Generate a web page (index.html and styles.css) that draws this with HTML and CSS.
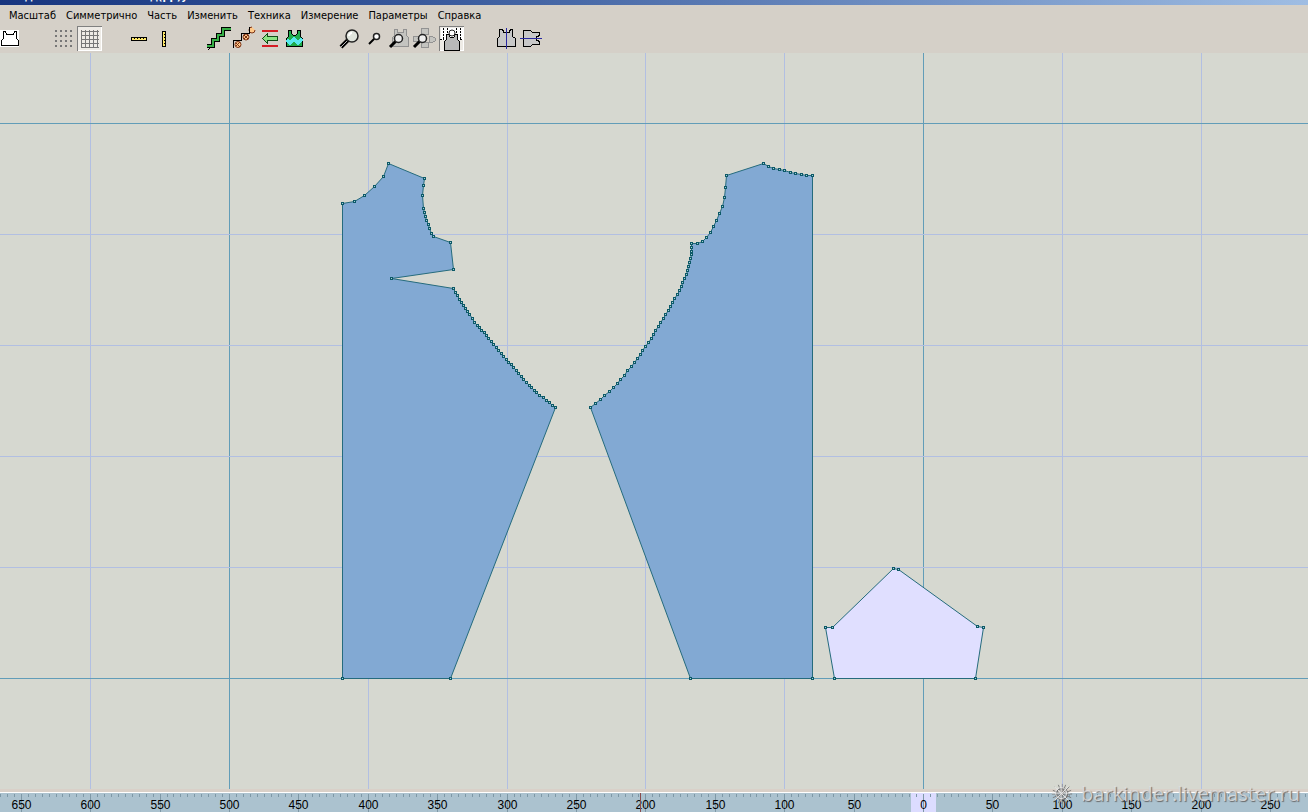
FILE: index.html
```
<!DOCTYPE html>
<html lang="ru">
<head>
  <meta charset="UTF-8" />
  <meta name="viewport" content="width=device-width, initial-scale=1.0" />
  <title>Редактор лекал</title>
  <link rel="stylesheet" href="styles.css">
</head>
<body>
  <header class="titlebar"><span class="title-left">Модель</span><span>д(рр)у</span></header>

  <nav class="menu">
    <button>Масштаб</button>
    <button>Симметрично</button>
    <button>Часть</button>
    <button>Изменить</button>
    <button>Техника</button>
    <button>Измерение</button>
    <button>Параметры</button>
    <button>Справка</button>
  </nav>

  <div class="toolbar">
    <div class="group first">
      <button aria-label="Деталь">
        <svg viewBox="0 0 25 25"><path fill="#fff" d="M3 4h19v17H3z"/><path class="line" d="M4.500 19.500V14.500L6.500 12.500V5.500H8.500L9.500 8.500H16.500L17.500 5.500H19.500V12.500L21.500 14.500V19.500Z"/></svg>
      </button>
    </div>

    <div class="group">
      <button aria-label="Точки сетки">
        <svg viewBox="0 0 25 25"><path stroke="#777" stroke-width="2" stroke-dasharray="2 3" d="M3 5h17M3 10h17M3 15h17M3 20h17"/></svg>
      </button>
      <button class="pressed" aria-label="Сетка">
        <svg viewBox="0 0 25 25"><path stroke="#777" fill="none" d="M4.500 4v18M8.500 4v18M12.500 4v18M16.500 4v18M20.500 4v18M4 5.500h18M4 9.500h18M4 13.500h18M4 17.500h18M4 21.500h18"/></svg>
      </button>
    </div>

    <div class="group near">
      <button aria-label="Горизонтальная линейка">
        <svg viewBox="0 0 25 25"><path fill="#ffe96b" stroke="#000" d="M5.500 11.500h15v3h-15z"/><path stroke="#000" d="M8.500 12v1M11.500 12v1M14.500 12v1M17.500 12v1"/></svg>
      </button>
      <button aria-label="Вертикальная линейка">
        <svg viewBox="0 0 25 25"><path fill="#ffe96b" stroke="#000" d="M11.500 5.500h3v15h-3z"/><path stroke="#000" d="M13 8.500h1M13 11.500h1M13 14.500h1M13 17.500h1"/></svg>
      </button>
    </div>

    <div class="group wide">
      <button aria-label="Ступени">
        <svg viewBox="0 0 25 25"><path fill="none" stroke="#000" stroke-width="4" d="M0 20H6V14H11V9H16V3H24"/><path fill="none" stroke="#36ad46" stroke-width="2" d="M0 20H6V14H11V9H16V3H24"/><path stroke="#000" d="M1 24l3-3"/></svg>
      </button>
      <button aria-label="Ступени с кругами">
        <svg viewBox="0 0 25 25"><g class="smooth" fill="#ffc888" stroke="#7c3215"><circle cx="6" cy="18.500" r="3"/><circle cx="14" cy="11" r="3"/><path d="M20 1a3 3 0 1 0 3 3"/><path d="M4 17l4 4M8 16l-4 4M12 9l4 4M16 9l-4 4"/></g><path class="line" d="M1.500 22V14.500H9.500V7.500H17.500V1"/></svg>
      </button>
      <button aria-label="Сдвиг">
        <svg viewBox="0 0 25 25"><path stroke="#d41c24" stroke-width="2" d="M5 5h16M5 20h16"/><path fill="#8ce285" stroke="#104c16" d="M5.500 12.500l5-5v3h10v4h-10v3z"/></svg>
      </button>
      <button aria-label="Узор детали">
        <svg viewBox="0 0 25 25"><path fill="#20ac4c" stroke="#000" d="M4.500 20.500V12.500L6.500 10.500V4.500H9.500V7.500L11 9H14L15.500 7.500V4.500H18.500V10.500L20.500 12.500V20.500Z"/><path fill="none" stroke="#57e9ef" stroke-width="3" d="M5 14l3 3 4-4 4 4 4-4"/></svg>
      </button>
    </div>

    <div class="group">
      <button aria-label="Крупный масштаб">
        <svg class="smooth" viewBox="0 0 25 25"><path stroke="#000" stroke-width="4" d="M4 21l7-7"/><path stroke="#bbb" stroke-width="1" d="M4 21l7-7"/><circle cx="15" cy="10" r="6" fill="#dfe4dc" stroke="#222" stroke-width="1.500"/><path fill="none" stroke="#fff" stroke-width="2" d="M12 10q0-3 3-3"/></svg>
      </button>
      <button aria-label="Мелкий масштаб">
        <svg class="smooth" viewBox="0 0 25 25"><path stroke="#000" stroke-width="2" d="M7 18l6-6"/><circle cx="14.500" cy="10.500" r="3" fill="#fff" stroke="#222" stroke-width="1.500"/></svg>
      </button>
      <button aria-label="Показать деталь">
        <svg viewBox="0 0 25 25"><path class="ghost" d="M5.500 20.500V11.500L7.500 9.500V3.500H10.500V6.500H16.500V3.500H19.500V9.500L21.500 11.500V20.500Z"/><g class="smooth"><path stroke="#000" stroke-width="3" d="M3 21l6-6"/><circle cx="11.500" cy="12.500" r="4" fill="#eee" stroke="#222" stroke-width="1.500"/></g></svg>
      </button>
      <button aria-label="Показать все детали">
        <svg viewBox="0 0 25 25"><path class="ghost" d="M9.500 2.500h7v6h-7zM1.500 10.500h7v5h-7zM17.500 10.500h3l3 2v2l-3 2h-3zM9.500 16.500h7v5h-7z"/><g class="smooth"><path stroke="#000" stroke-width="3" d="M2 21l6-6"/><circle cx="10.500" cy="12.500" r="4" fill="#eee" stroke="#222" stroke-width="1.500"/></g></svg>
      </button>
      <button class="pressed last" aria-label="Разместить деталь">
        <svg viewBox="0 0 25 25"><path fill="#fff" d="M2 2h22v12H2z"/><path fill="none" stroke="#000" stroke-dasharray="2 1" d="M4.500 2V12.500M8.500 2V8M17.500 2V8M21.500 2V13M1 13.500H5M21 13.500H24"/><path fill="#b9b9b9" stroke="#000" d="M5.500 24.500V15.500L7.500 13.500V8.500H9.500L11 11H15L16.500 8.500H18.500V13.500L20.500 15.500V24.500Z"/><circle class="smooth" cx="13" cy="7" r="3" fill="#fff" stroke="#222"/></svg>
      </button>
    </div>

    <div class="group">
      <button aria-label="Вертикальная ось">
        <svg viewBox="0 0 25 25"><path class="line body" d="M3.500 20.500V12.500L5.500 10.500V3.500H8.500L10 6.500H15L16.500 3.500H18.500V10.500L21.500 12.500V20.500Z"/><path stroke="#2929a1" d="M12.500 2v21"/></svg>
      </button>
      <button aria-label="Горизонтальная ось">
        <svg viewBox="0 0 25 25"><path class="line body" d="M4.500 4.500H11.500L13.500 6.500H20.500V9.500L17.500 11V14L20.500 15.500V18.500H13.500L11.500 20.500H4.500Z"/><path stroke="#2929a1" d="M1 12.500h22"/></svg>
      </button>
    </div>
  </div>

  <main class="canvas">
    <svg id="drawing" role="img" aria-label="Чертёж деталей"></svg>
  </main>

  <footer class="ruler">
    <svg id="ruler" role="img" aria-label="Линейка"></svg>
  </footer>

  <div class="watermark">
    <svg viewBox="0 0 24 24"><g fill="none" stroke="#777" stroke-width="2"><circle cx="12" cy="12" r="6"/><path d="M12 1v22M1 12h22M4 4l16 16M20 4L4 20M8 2l8 20M2 8l20 8M16 2L8 22M22 8L2 16" stroke-width="1"/></g><g fill="none" stroke="#e8e8e8"><circle cx="11" cy="11" r="6"/><path d="M11 1v20M1 11h20M4 4l15 15M19 4L4 19"/></g></svg>
    <span>barkinder.livemaster.ru</span>
  </div>

  <script src="script.js"></script>
</body>
</html>
```
FILE: styles.css
```
body {
  margin: 0;
  height: 100vh;
  display: flex;
  flex-direction: column;
  overflow: hidden;
  background-color: #d5d0c8;
  font-family: "DejaVu Sans Condensed", "DejaVu Sans", sans-serif;
  font-size: 11px;
  color: #000;
}

button {
  border: 0;
  padding: 0;
  background: none;
  font: inherit;
  color: inherit;
}

/* Title bar, only its lower edge is on screen */
.titlebar {
  display: flex;
  align-items: flex-end;
  height: 5px;
  overflow: hidden;
  box-sizing: border-box;
  padding-left: 8px;
  padding-bottom: 3px;
  background: linear-gradient(to right, #17357f, #345599 30%, #9fbde3);
  color: #fff;
  font-weight: bold;
  line-height: 11px;
}

.title-left {
  width: 142px;
}

.menu {
  display: flex;
  gap: 10px;
  height: 20px;
  padding-left: 9px;
  align-items: center;
}

/* Toolbar */
.toolbar {
  display: flex;
  height: 28px;
  padding-top: 1px;
  box-sizing: border-box;
}

.group {
  display: flex;
  margin-left: 30px;
}

.group.first {
  margin-left: -3px;
}

.group.near {
  margin-left: 24px;
}

.group.wide {
  margin-left: 31px;
}

.toolbar button {
  width: 25px;
  height: 25px;
}

.toolbar svg {
  display: block;
  width: 25px;
  height: 25px;
  shape-rendering: crispEdges;
}

.toolbar .smooth {
  shape-rendering: auto;
}

.toolbar .pressed {
  background-color: #eeebe6;
  box-shadow: inset 1px 1px #808080, inset -1px -1px #fff;
}

.toolbar .last {
  margin-left: 2px;
}

.line {
  fill: none;
  stroke: #000;
}

.body {
  fill: #c8c8c8;
}

.ghost {
  fill: #c4c4c0;
  stroke: #929292;
}

/* Drawing area */
.canvas {
  flex: 1;
  min-height: 0;
  background-color: #d6d8d0;
  border-bottom: 3px solid #d9d0c8;
}

.canvas svg,
.ruler svg {
  display: block;
  width: 100%;
  height: 100%;
}

.grid {
  stroke: #b2bfe2;
  shape-rendering: crispEdges;
}

.grid.major {
  stroke: #629db8;
}

.piece {
  fill: #82a9d3;
  stroke: #256b7d;
}

.piece.light {
  fill: #e0dfff;
}

.node {
  fill: #a5ced6;
  stroke: #0c5967;
  shape-rendering: crispEdges;
}

/* Ruler */
.ruler {
  height: 19px;
  border-top: 1px solid #fff;
  background-color: #abc2cf;
}

.tick {
  stroke: #7e98a6;
  shape-rendering: crispEdges;
}

.zero {
  fill: #dcdcff;
}

.cursor {
  stroke: #884c4c;
  shape-rendering: crispEdges;
}

.ruler text {
  font-family: "Liberation Sans", Arial, sans-serif;
  font-size: 12px;
  text-anchor: middle;
}

.watermark {
  position: absolute;
  right: 8px;
  bottom: 4px;
  display: flex;
  align-items: center;
  gap: 8px;
  font-family: "Open Sans", sans-serif;
  font-size: 20px;
  line-height: 28px;
  color: rgba(225, 225, 225, 0.8);
  text-shadow: 1px 1px 1px #666;
}

.watermark svg {
  width: 22px;
  height: 22px;
}
```
FILE: script.js
```
const SVG = "http://www.w3.org/2000/svg";
const top0 = 53;        // height of the bars above the drawing
const originX = 923.5;  // zero mark
const originY = 678;    // base line
const unit = 1.388;     // pixels per ruler unit

function add(parent, name, attrs, text) {
  const el = document.createElementNS(SVG, name);
  for (const key in attrs) el.setAttribute(key, attrs[key]);
  if (text !== undefined) el.textContent = text;
  parent.appendChild(el);
  return el;
}

// Put evenly spaced nodes along a curve given by a few points
function spread(points, step) {
  const out = [points[0]];
  for (let i = 1; i < points.length; i++) {
    const [x1, y1] = points[i - 1];
    const [x2, y2] = points[i];
    const n = Math.max(1, Math.round(Math.hypot(x2 - x1, y2 - y1) / step));
    for (let k = 1; k <= n; k++) {
      out.push([Math.round(x1 + (x2 - x1) * k / n), Math.round(y1 + (y2 - y1) * k / n)]);
    }
  }
  return out;
}

const front = [
  [342, 203], [354, 201], [364, 195], [374, 186], [383, 176], [388, 163],
  [424, 178], [423, 185], [422, 195], [423, 208], [424, 212], [425, 216],
  [426, 220], [428, 224], [429, 228], [431, 233], [433, 236], [450, 242],
  [453, 269], [391, 278],
  ...spread([[453, 288], [459, 299], [463, 305], [469, 314], [474, 322],
    [479, 327], [486, 335], [493, 344], [503, 356], [513, 367], [526, 382],
    [536, 392], [546, 400], [555, 407]], 4),
  [450, 678], [342, 678]
];

const back = [
  [763, 163], [768, 166], [773, 168], [779, 169], [784, 170], [790, 172],
  [795, 173], [801, 174], [806, 175], [812, 175], [812, 678], [690, 678],
  [590, 407], [595, 403], [600, 399], [604, 395], [609, 391], [613, 387],
  [617, 383], [620, 379], [624, 375], [627, 370], [631, 366], [634, 362],
  [637, 358], [640, 354], [642, 350], [645, 346], [648, 342], [651, 338],
  [653, 334], [655, 330], [658, 326], [660, 322], [663, 318], [665, 314],
  [668, 310], [670, 306], [672, 302], [674, 298], [677, 294], [679, 290],
  [681, 286], [682, 282], [684, 278], [686, 274], [687, 270], [688, 266],
  [689, 262], [690, 258], [691, 254], [691, 251], [691, 247], [691, 243],
  [697, 243], [702, 241], [706, 237], [710, 232], [713, 226], [716, 220],
  [719, 213], [722, 206], [724, 197], [725, 187], [726, 175]
];

const pocket = [
  [893, 568], [898, 569], [977, 626], [983, 627], [975, 678], [834, 678],
  [825, 627], [832, 627]
];

function drawPiece(parent, points, cls) {
  const list = points.map(([x, y]) => (x + 0.5) + "," + (y + 0.5)).join(" ");
  add(parent, "polygon", { points: list, class: cls });
  points.forEach(([x, y]) => {
    add(parent, "rect", { x: x - 0.5, y: y - 0.5, width: 2, height: 2, class: "node" });
  });
}

function drawCanvas() {
  const svg = document.getElementById("drawing");
  svg.replaceChildren();
  const g = add(svg, "g", { transform: `translate(0 ${-top0})` });
  for (let v = -600; v * unit + originX < window.innerWidth; v += 100) {
    const x = Math.floor(originX + v * unit) + 0.5;
    add(svg, "line", { x1: x, x2: x, y1: 0, y2: "100%", class: v === 0 || v === -500 ? "grid major" : "grid" });
  }
  for (let i = 0; i <= 5; i++) {
    const y = originY - top0 - i * 111 + 0.5;
    add(svg, "line", { x1: 0, x2: "100%", y1: y, y2: y, class: i === 0 || i === 5 ? "grid major" : "grid" });
  }
  svg.appendChild(g);
  drawPiece(g, front, "piece");
  drawPiece(g, back, "piece");
  drawPiece(g, pocket, "piece light");
}

function drawRuler() {
  const svg = document.getElementById("ruler");
  svg.replaceChildren();
  add(svg, "rect", { x: Math.floor(originX) - 12, y: 0, width: 25, height: 19, class: "zero" });
  for (let v = -665; v * unit + originX < window.innerWidth; v += 5) {
    const x = Math.floor(originX + v * unit) + 0.5;
    add(svg, "line", { x1: x, x2: x, y1: 1, y2: v % 50 === 0 ? 19 : 4, class: "tick" });
  }
  for (let v = -650; v * unit + originX < window.innerWidth - 10; v += 50) {
    add(svg, "text", { x: Math.floor(originX + v * unit) + 0.5, y: 16 }, Math.abs(v));
  }
  add(svg, "line", { x1: 640.5, x2: 640.5, y1: 0, y2: 19, class: "cursor" });
}

function draw() {
  drawCanvas();
  drawRuler();
}

draw();
window.addEventListener("resize", draw);
```
